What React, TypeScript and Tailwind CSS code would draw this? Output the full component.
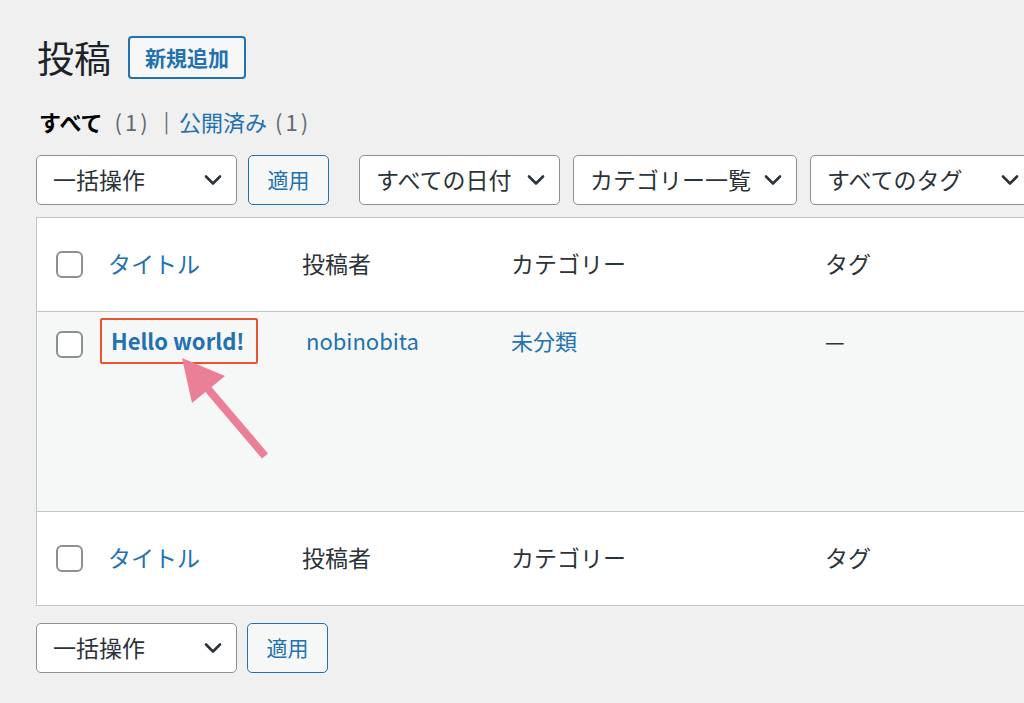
import { ReactNode } from 'react';

const FONT = { fontFamily: '"Noto Sans CJK JP", "Noto Sans", sans-serif' };

function Chevron() {
  return (
    <svg width="18" height="12" viewBox="0 0 18 12" fill="none" className="shrink-0">
      <path d="M2 2.5 L9 9.5 L16 2.5" stroke="#2c3338" strokeWidth="2.6" strokeLinecap="round" strokeLinejoin="round" />
    </svg>
  );
}

function Select({ label, width }: { label: string; width: string }) {
  return (
    <div
      className={`${width} h-[50px] bg-white border border-[#8c8f94] rounded-[5px] flex items-center justify-between pl-[16px] pr-[14px] text-[23px] text-[#2c3338] shrink-0 overflow-hidden`}
    >
      <span className="whitespace-nowrap leading-none pb-[2px]">{label}</span>
      <Chevron />
    </div>
  );
}

function ApplyButton() {
  return (
    <div className="w-[81px] h-[50px] bg-[#f6f7f7] border border-[#2271b1] rounded-[5px] flex items-center justify-center text-[21px] text-[#2271b1] shrink-0">
      適用
    </div>
  );
}

function Checkbox() {
  return <div className="w-[27px] h-[27px] bg-white border-2 border-[#8c8f94] rounded-[6px]" />;
}

function Row({ children, className }: { children: ReactNode; className?: string }) {
  return (
    <div className={`grid grid-cols-[71px_194px_209px_314px_1fr] ${className ?? ''}`}>{children}</div>
  );
}

function HeaderRow() {
  return (
    <Row className="h-[93px] items-center bg-white text-[23px] leading-none">
      <div className="pl-[19px] flex items-center">
        <Checkbox />
      </div>
      <div className="text-[#2271b1] pb-[3px]">タイトル</div>
      <div className="text-[#2c3338] pb-[3px]">投稿者</div>
      <div className="text-[#2c3338] pb-[3px]">カテゴリー</div>
      <div className="text-[#2c3338] pb-[3px]">タグ</div>
    </Row>
  );
}

export default function App() {
  return (
    <div className="w-[1024px] h-[703px] overflow-hidden bg-[#f0f0f1] relative" style={FONT}>
      <div className="pl-[36px] pt-[36px]">
        {/* 見出し */}
        <div className="flex items-center gap-[17px] h-[43px]">
          <h1 className="text-[37px] text-[#1d2327] leading-none ml-[1px]">投稿</h1>
          <div className="h-[43px] w-[118px] border-2 border-[#2271b1] rounded-[4px] bg-[#f6f7f7] flex items-center justify-center text-[21px] font-bold text-[#2271b1]">
            新規追加
          </div>
        </div>

        {/* ステータス */}
        <div className="mt-[27px] flex items-center text-[22px] h-[30px] ml-[3px] leading-none">
          <span className="font-bold text-[#000]">すべて</span>
          <span className="text-[#646970] ml-[12px] tracking-[3px]">(1)</span>
          <span className="text-[#646970] ml-[13px] mr-[10px] text-[20px]">|</span>
          <span className="text-[#2271b1]">公開済み</span>
          <span className="text-[#646970] ml-[8px] tracking-[3px]">(1)</span>
        </div>

        {/* フィルター */}
        <div className="mt-[19px] flex items-center">
          <Select label="一括操作" width="w-[201px]" />
          <div className="ml-[11px]">
            <ApplyButton />
          </div>
          <div className="ml-[30px] flex gap-[13px]">
            <Select label="すべての日付" width="w-[201px]" />
            <Select label="カテゴリー一覧" width="w-[224px]" />
            <Select label="すべてのタグ" width="w-[224px]" />
          </div>
        </div>

        {/* テーブル */}
        <div className="mt-[12px] w-[1100px] border border-[#c3c4c7]">
          <div className="border-b border-[#c3c4c7]">
            <HeaderRow />
          </div>
          <Row className="h-[199px] bg-[#f6f7f7] text-[22px] items-start">
            <div className="pl-[19px] pt-[19px] flex">
              <Checkbox />
            </div>
            <div className="pt-[12px] pl-[3px] font-bold text-[#2271b1] relative">
              Hello world!
              <div className="absolute left-[-8px] top-[6px] w-[158px] h-[46px] border-2 border-[#e9532f] rounded-[2px]" />
            </div>
            <div className="pt-[12px] pl-[4px] text-[#2271b1]">nobinobita</div>
            <div className="pt-[12px] text-[#2271b1]">未分類</div>
            <div className="pt-[12px] text-[#2c3338]">—</div>
          </Row>
          <div className="border-t border-[#c3c4c7]">
            <HeaderRow />
          </div>
        </div>

        {/* 下部操作 */}
        <div className="mt-[17px] flex items-center">
          <Select label="一括操作" width="w-[201px]" />
          <div className="ml-[10px]">
            <ApplyButton />
          </div>
        </div>
      </div>

      {/* 矢印 */}
      <svg className="absolute left-0 top-0 pointer-events-none" width="1024" height="703">
        <line x1="208" y1="389" x2="265" y2="456" stroke="#ec7f98" strokeWidth="8" />
        <polygon points="182,358 192,403 225,376" fill="#ec7f98" />
      </svg>
    </div>
  );
}
